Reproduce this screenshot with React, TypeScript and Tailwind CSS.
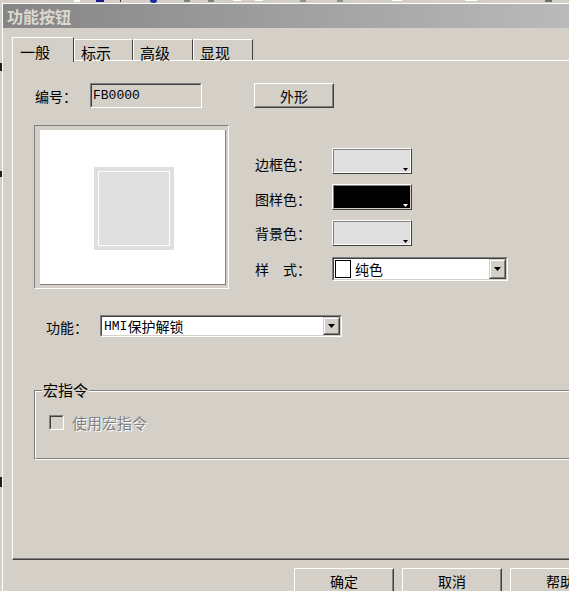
import React from "react";

function Arrow() {
  return (
    <svg width="7" height="4" viewBox="0 0 7 4">
      <path d="M0 0H7L3.5 4Z" fill="#000" />
    </svg>
  );
}

function DropBtn() {
  return (
    <div className="w-[17px] h-full border border-t-[#d4d0c8] border-l-[#d4d0c8] border-r-[#404040] border-b-[#404040] bg-[#d4d0c8] shrink-0">
      <div className="w-full h-full border border-t-white border-l-white border-r-[#808080] border-b-[#808080] flex items-center justify-center">
        <Arrow />
      </div>
    </div>
  );
}

function Swatch({ black }: { black?: boolean }) {
  return (
    <div className="relative w-[80px] h-[26px] border border-t-white border-l-white border-r-[#404040] border-b-[#404040] bg-[#d4d0c8]">
      <div
        className={
          black
            ? "w-full h-full border border-t-[#808080] border-l-[#808080] border-r-[#d4d0c8] border-b-[#d4d0c8] bg-black"
            : "w-full h-full border border-t-[#808080] border-l-[#808080] border-r-white border-b-white bg-[#e0e0e0]"
        }
      />
      <svg width="5" height="3" viewBox="0 0 5 3" className="absolute right-[3px] bottom-[2px]">
        <path d="M0 0H5L2.5 3Z" fill={black ? "#ffffff" : "#000"} />
      </svg>
    </div>
  );
}

function Raised({ className, children }: { className: string; children?: React.ReactNode }) {
  return (
    <div className={"border border-t-white border-l-white border-r-[#404040] border-b-[#404040] bg-[#d4d0c8] " + className}>
      <div className="w-full h-full border border-t-[#d4d0c8] border-l-[#d4d0c8] border-r-[#808080] border-b-[#808080] flex items-center justify-center text-[14px] leading-none">
        {children}
      </div>
    </div>
  );
}

function ActiveTab({ label }: { label: string }) {
  return (
    <div className="relative z-10 w-[62px] h-[25px] bg-[#d4d0c8] border-t border-l border-r border-t-white border-l-white border-r-[#404040] pl-[7px] pt-[6px] text-[15px] leading-none">
      {label}
    </div>
  );
}

function SideTab({ label, w }: { label: string; w: string }) {
  return (
    <div className={"mt-[2px] h-[21px] bg-[#d4d0c8] border-t border-l border-r border-t-white border-l-white border-r-[#404040] pl-[6px] pt-[5px] text-[15px] leading-none " + w}>
      {label}
    </div>
  );
}

export default function App() {
  return (
    <div className="w-[569px] h-[591px] overflow-hidden bg-[#d4d0c8] text-black font-['Noto_Sans_CJK_SC','Noto_Sans',sans-serif]">
      {/* remnants of toolbar behind */}
      <div className="relative h-[3px]">
        <div className="absolute left-[74px] top-0 w-[6px] h-[2px] bg-white" />
        <div className="absolute left-[96px] top-0 w-[8px] h-[2px] bg-[#1a1a8c]" />
        <div className="absolute left-[120px] top-0 w-[1px] h-[2px] bg-[#404040]" />
        <div className="absolute left-[150px] top-0 w-[7px] h-[3px] rounded-b-full bg-[#1c2c9c]" />
        <div className="absolute left-[184px] top-0 w-[6px] h-[2px] bg-[#808080]" />
        <div className="absolute left-[208px] top-0 w-[6px] h-[2px] bg-[#808080]" />
        <div className="absolute left-[233px] top-0 w-[8px] h-[1px] bg-white" />
        <div className="absolute left-[255px] top-0 w-[8px] h-[1px] bg-white" />
        <div className="absolute left-[300px] top-0 w-[6px] h-[2px] bg-[#909090]" />
        <div className="absolute left-[337px] top-0 w-[6px] h-[2px] bg-[#909090]" />
        <div className="absolute left-[392px] top-0 w-[10px] h-[1px] bg-white" />
        <div className="absolute left-[465px] top-0 w-[12px] h-[1px] bg-white" />
        <div className="absolute left-[545px] top-0 w-[7px] h-[2px] border border-[#707070]" />
      </div>
      <div className="flex h-[588px]">
        <div className="w-[2px] shrink-0 flex flex-col">
          <div className="h-[60px]" />
          <div className="h-[8px] w-[2px] bg-[#202020]" />
          <div className="h-[100px]" />
          <div className="h-[6px] w-[2px] bg-[#202020]" />
          <div className="h-[300px]" />
          <div className="h-[10px] w-[2px] bg-[#202020]" />
        </div>
        <div className="flex-1 min-w-0 border-l border-t border-white flex flex-col">
          {/* title bar */}
          <div className="h-[24px] shrink-0 bg-gradient-to-r from-[#858585] to-[#bababa] flex items-center pl-[4px] text-[16px] font-bold leading-none text-[#dcd8d0]">
            功能按钮
          </div>
          {/* body */}
          <div className="flex-1 pl-[9px] overflow-hidden">
            {/* tabs */}
            <div className="mt-[9px] h-[23px] flex items-start">
              <ActiveTab label="一般" />
              <SideTab label="标示" w="w-[59px]" />
              <SideTab label="高级" w="w-[60px]" />
              <SideTab label="显现" w="w-[60px]" />
            </div>
            {/* panel */}
            <div className="w-[600px] h-[500px] border-t border-l border-b border-t-white border-l-white border-b-[#404040]">
              <div className="h-full border-b border-b-[#808080] pt-[22px]">
                {/* row 1 */}
                <div className="flex items-center h-[25px]">
                  <div className="ml-[22px] w-[55px] text-[14px] leading-none">编号：</div>
                  <div className="w-[112px] h-[25px] border border-t-[#808080] border-l-[#808080] border-r-white border-b-white">
                    <div className="w-full h-full border border-t-[#404040] border-l-[#404040] border-r-[#d4d0c8] border-b-[#d4d0c8] flex items-center pl-[1px] text-[13px] leading-none font-['Liberation_Mono',monospace]">
                      FB0000
                    </div>
                  </div>
                  <Raised className="ml-[52px] w-[80px] h-[25px]">外形</Raised>
                </div>
                {/* row 2 */}
                <div className="flex mt-[17px]">
                  <div className="ml-[21px] w-[195px] h-[164px] border border-t-[#808080] border-l-[#808080] border-r-white border-b-white pt-[4px] pl-[5px] pr-[2px] pb-[3px]">
                    <div className="w-full h-full bg-white border-r border-b border-r-[#808080] border-b-[#808080] pl-[54px] pt-[37px]">
                      <div className="w-[80px] h-[83px] bg-[#dfdfdf] p-[4px]">
                        <div className="w-full h-full border border-white bg-[#dfdfdf]" />
                      </div>
                    </div>
                  </div>
                  <div className="ml-[26px] pt-[23px] flex flex-col">
                    <div className="flex items-center">
                      <div className="w-[77px] text-[14px] leading-none mt-[6px]">边框色：</div>
                      <Swatch />
                    </div>
                    <div className="flex items-center mt-[10px]">
                      <div className="w-[77px] text-[14px] leading-none mt-[3px]">图样色：</div>
                      <Swatch black />
                    </div>
                    <div className="flex items-center mt-[10px]">
                      <div className="w-[77px] text-[14px] leading-none">背景色：</div>
                      <Swatch />
                    </div>
                    <div className="flex items-center mt-[11px]">
                      <div className="w-[77px] text-[14px] leading-none flex">
                        <span>样</span>
                        <span className="ml-[14px]">式：</span>
                      </div>
                      <div className="w-[176px] h-[24px] border border-t-[#808080] border-l-[#808080] border-r-white border-b-white">
                        <div className="w-full h-full border border-t-[#404040] border-l-[#404040] border-r-[#d4d0c8] border-b-[#d4d0c8] bg-white flex items-stretch">
                          <div className="flex-1 flex items-center pl-[1px]">
                            <div className="w-[16px] h-[18px] border border-black bg-white" />
                            <span className="ml-[4px] text-[14px] leading-none">纯色</span>
                          </div>
                          <DropBtn />
                        </div>
                      </div>
                    </div>
                  </div>
                </div>
                {/* row 3 */}
                <div className="flex items-center mt-[26px]">
                  <div className="ml-[33px] w-[54px] text-[14px] leading-none mt-[2px]">功能：</div>
                  <div className="w-[242px] h-[22px] border border-t-[#808080] border-l-[#808080] border-r-white border-b-white">
                    <div className="w-full h-full border border-t-[#404040] border-l-[#404040] border-r-[#d4d0c8] border-b-[#d4d0c8] bg-white flex items-stretch">
                      <div className="flex-1 flex items-center pl-[2px] text-[14px] leading-none">
                        <span className="font-['Liberation_Mono',monospace] text-[13px]">HMI</span>
                        <span>保护解锁</span>
                      </div>
                      <DropBtn />
                    </div>
                  </div>
                </div>
                {/* group box */}
                <div className="relative ml-[21px] mt-[53px] w-[600px] h-[70px] border border-t-[#808080] border-l-[#808080] border-r-white border-b-white">
                  <div className="w-full h-full border border-t-white border-l-white border-r-[#808080] border-b-[#808080] pt-[23px] pl-[13px]">
                    <div className="flex items-center">
                      <div className="w-[15px] h-[15px] border border-t-[#808080] border-l-[#808080] border-r-white border-b-white">
                        <div className="w-full h-full border border-t-[#404040] border-l-[#404040] border-r-[#d4d0c8] border-b-[#d4d0c8] bg-[#d4d0c8]" />
                      </div>
                      <span className="ml-[8px] text-[15px] leading-none text-[#808080] [text-shadow:1px_1px_0_#ffffff]">使用宏指令</span>
                    </div>
                  </div>
                  <div className="absolute left-[7px] -top-[9px] bg-[#d4d0c8] px-[1px] text-[15px] leading-[16px]">宏指令</div>
                </div>
              </div>
            </div>
            {/* bottom buttons */}
            <div className="flex mt-[8px] ml-[282px] gap-[8px]">
              <Raised className="w-[100px] h-[25px] shrink-0">确定</Raised>
              <Raised className="w-[100px] h-[25px] shrink-0">取消</Raised>
              <Raised className="w-[100px] h-[25px] shrink-0">帮助</Raised>
            </div>
          </div>
        </div>
      </div>
    </div>
  );
}
